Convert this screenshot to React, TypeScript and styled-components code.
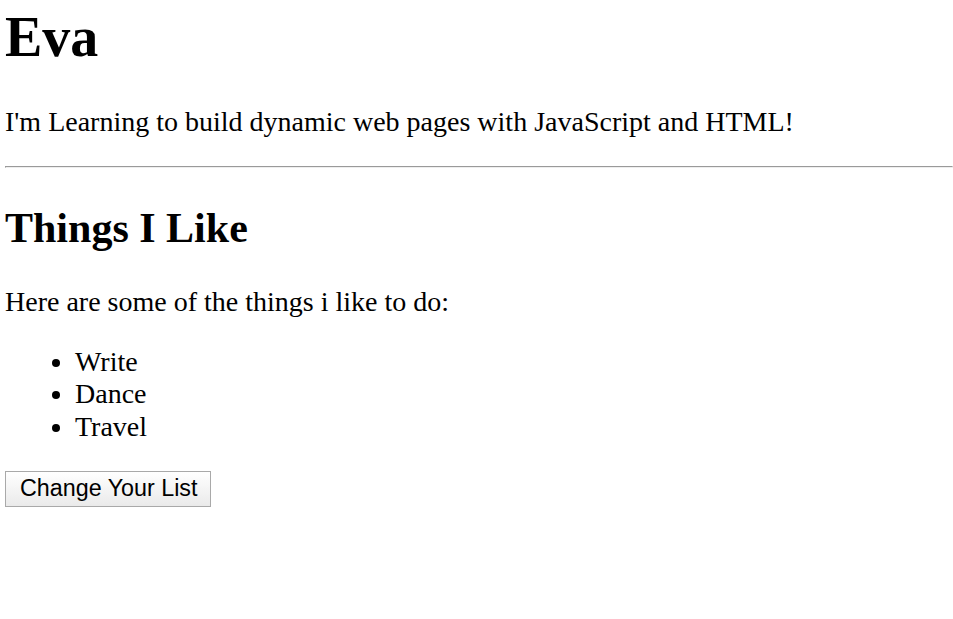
import React from "react";
import styled, { createGlobalStyle } from "styled-components";

const Global = createGlobalStyle`
  html, body { margin: 0; padding: 0; background: #fff; overflow: hidden; }
  body { font-family: "Liberation Serif", "Times New Roman", serif; color: #000; }
`;

const Page = styled.div`
  padding: 0 0 0 5px;
  font-size: 28px;
  display: flow-root;
`;

const Title = styled.h1`
  font-size: 56px;
  font-weight: bold;
  margin: 5px 0 37px;
`;

const Text = styled.p`
  margin: 0 0 28px;
`;

const Rule = styled.hr`
  margin: 0 0 36px;
  height: 0;
  border-style: solid;
  border-width: 1px;
  border-color: #9a9a9a #eeeeee #eeeeee #9a9a9a;
`;

const Subtitle = styled.h2`
  font-size: 42px;
  font-weight: bold;
  margin: 0 0 34px;
`;

const List = styled.ul`
  margin: 0 0 28px;
  padding-left: 70px;
  list-style: disc;
  line-height: 32.3px;
`;

const Button = styled.button`
  font-family: "Liberation Sans", Arial, sans-serif;
  font-size: 23.3px;
  color: #000;
  height: 36px;
  padding: 0 13px 0 14px;
  border: 1px solid #a9a9a9;
  border-radius: 0;
  background: linear-gradient(#ffffff, #eaeaea);
  cursor: pointer;
`;

export default function App() {
  return (
    <>
      <Global />
      <Page>
        <Title>Eva</Title>
        <Text>I'm Learning to build dynamic web pages with JavaScript and HTML!</Text>
        <Rule />
        <Subtitle>Things I Like</Subtitle>
        <Text>Here are some of the things i like to do:</Text>
        <List>
          <li>Write</li>
          <li>Dance</li>
          <li>Travel</li>
        </List>
        <Button>Change Your List</Button>
      </Page>
    </>
  );
}
